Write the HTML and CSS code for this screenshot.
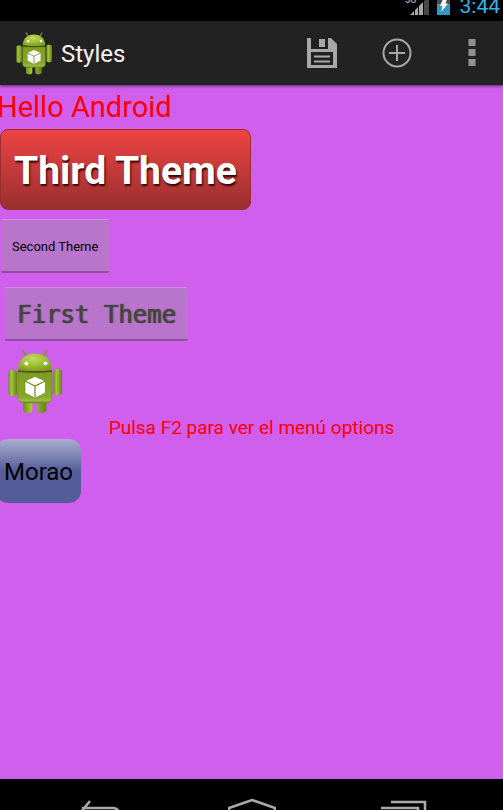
FILE: index.html
```html
<!DOCTYPE html>
<html lang="es">
<head>
<meta charset="utf-8">
<meta name="viewport" content="width=device-width, initial-scale=1">
<title>Styles</title>
<link rel="stylesheet" href="styles.css">
</head>
<body>
<svg class="defs" aria-hidden="true">
  <defs>
    <linearGradient id="side" x1="0" x2="1" y1="0" y2="0">
      <stop offset="0" stop-color="#6f8f16"/><stop offset=".35" stop-color="#a3c639"/><stop offset="1" stop-color="#65801a"/>
    </linearGradient>
    <linearGradient id="torso" x1="0" x2="0" y1="0" y2="1">
      <stop offset="0" stop-color="#7f9c20"/><stop offset=".8" stop-color="#88a828"/><stop offset=".92" stop-color="#9cb944"/><stop offset="1" stop-color="#6d8b18"/>
    </linearGradient>
    <radialGradient id="dome" cx=".45" cy=".3" r=".7">
      <stop offset="0" stop-color="#c3db62"/><stop offset=".5" stop-color="#a0c234"/><stop offset="1" stop-color="#7f9f1e"/>
    </radialGradient>
    <symbol id="robot" viewBox="0 0 54 64">
      <path d="M15 1l4 6M39 1l-4 6" stroke="#7c9820" stroke-width="1.6" stroke-linecap="round"/>
      <path d="M29 50h9.500v10q0 3-4.700 3t-4.800-3zM15 50h9.500v10q0 3-4.700 3t-4.800-3z" fill="url(#side)"/>
      <rect x=".5" y="20" width="8.500" height="26" rx="3" fill="url(#side)"/>
      <rect x="45.500" y="19" width="8.500" height="26" rx="3" fill="url(#side)"/>
      <path d="M10 22h34v25q0 6-7 6H17q-7 0-7-6z" fill="url(#torso)" stroke="#708e18" stroke-width=".7"/>
      <path d="M10 20C10 10 17 3.500 27 3.500S44 10 44 20q-17 2-34 0z" fill="url(#dome)"/>
      <path d="M10 21q17 2 34 0" fill="none" stroke="#405510" stroke-width="1.300"/>
      <circle cx="18.300" cy="13.500" r="1.900" fill="#fff"/><circle cx="37.500" cy="13.300" r="1.900" fill="#fff"/>
      <path d="M27 26.500l10.300 4.500v12L27 48l-10-5V31z" fill="#fff" stroke="#698417" stroke-width=".6"/>
      <path d="M17 31l10 5 10.300-5M27 36v11.500" fill="none" stroke="#72891d" stroke-width="1.200"/>
    </symbol>
  </defs>
</svg>

<div class="screen">
  <header class="status">
    <span class="network">3G</span>
    <svg class="signal" viewBox="0 0 19 19" aria-hidden="true"><path d="M0 19L4 15v4zM5 14l3-3v8H5zM9 10l4-4v13H9z" fill="#aaa"/><path d="M14 5l5-5v19h-5z" fill="#484848"/></svg>
    <svg class="battery" viewBox="0 0 13 19" aria-hidden="true"><path d="M0 0h13v19H0z" fill="#3495be"/><path d="M0 0h13v8H0z" fill="#4b4b4b"/><path d="M6 3h4L8.500 7.500H11L4 16l1.500-6H3z" fill="#fff"/></svg>
    <time class="clock">3:44</time>
  </header>

  <nav class="actionbar">
    <svg class="app-icon" aria-hidden="true"><use href="#robot"/></svg>
    <h1 class="title">Styles</h1>
    <button class="action" aria-label="Guardar">
      <svg class="glyph" viewBox="0 0 30 30" aria-hidden="true"><path fill-rule="evenodd" d="M0 0h4v11h17V0h3l6 6v24H0zM4 14v13h22V14z" fill="#a8a8a8"/><path d="M12 1h6v8h-6z" fill="#a8a8a8"/><path d="M7 18.500h16M7 23.500h16" stroke="#a8a8a8" stroke-width="2"/></svg>
    </button>
    <button class="action" aria-label="Añadir">
      <svg class="glyph" viewBox="0 0 30 30" aria-hidden="true"><circle cx="15" cy="15" r="13.500" fill="none" stroke="#a8a8a8" stroke-width="2"/><path d="M15 7v16M7 15h16" stroke="#a8a8a8" stroke-width="2"/></svg>
    </button>
    <button class="action" aria-label="Más opciones">
      <svg class="glyph" viewBox="0 0 30 30" aria-hidden="true"><path d="M11.500 1h7v7h-7zM11.500 11h7v7h-7zM11.500 21h7v7h-7z" fill="#929292"/></svg>
    </button>
  </nav>

  <main class="content">
    <p class="hello">Hello Android</p>
    <button class="btn third">Third Theme</button>
    <button class="btn flat second">Second Theme</button>
    <button class="btn flat first">First Theme</button>
    <svg class="picture" role="img" aria-label="Android"><use href="#robot"/></svg>
    <p class="hint">Pulsa F2 para ver el menú options</p>
    <button class="btn morao">Morao</button>
  </main>

  <footer class="navbar">
    <button class="key" aria-label="Atrás"><svg class="keyglyph" viewBox="0 0 48 12" aria-hidden="true"><path d="M14 3L5 14M6 10h31q4 0 6 4" fill="none" stroke="#aaa" stroke-width="2.500"/></svg></button>
    <button class="key" aria-label="Inicio"><svg class="keyglyph" viewBox="0 0 48 12" aria-hidden="true"><path d="M1 13V10L24 2l23 8v3" fill="none" stroke="#aaa" stroke-width="2.500"/></svg></button>
    <button class="key" aria-label="Recientes"><svg class="keyglyph" viewBox="0 0 48 12" aria-hidden="true"><path d="M11 4h34v10M1 10h37v3" fill="none" stroke="#aaa" stroke-width="2.500"/></svg></button>
  </footer>
</div>
</body>
</html>
```
FILE: styles.css
```css
* {
  box-sizing: border-box;
}

body {
  margin: 0;
  background: #000;
  font-family: Roboto, "Liberation Sans", sans-serif;
}

p,
h1 {
  margin: 0;
  font-weight: 400;
}

button {
  font-family: inherit;
  border: 0;
  padding: 0;
  background: none;
  color: inherit;
}

.defs {
  position: absolute;
  width: 0;
  height: 0;
}

.screen {
  display: flex;
  flex-direction: column;
  height: 100vh;
  overflow: hidden;
}

/* Status bar, cut by the top of the window */
.status {
  display: flex;
  flex: none;
  align-items: flex-end;
  justify-content: flex-end;
  height: 21px;
  padding: 0 3px 6px 0;
  overflow: hidden;
  background: #000;
}

.network {
  margin-right: -7px;
  padding-bottom: 10px;
  color: #999;
  font-size: 9px;
  font-weight: 700;
  line-height: 10px;
}

.signal {
  flex: none;
  width: 19px;
  height: 19px;
}

.battery {
  flex: none;
  width: 13px;
  height: 19px;
  margin: 0 10px 0 8px;
}

.clock {
  margin-bottom: -3px;
  color: #33b5e5;
  font-size: 21px;
  line-height: 24px;
}

.actionbar {
  position: relative;
  display: flex;
  flex: none;
  align-items: center;
  height: 64px;
  padding-left: 16px;
  background: #222;
  box-shadow: 0 1px 3px rgba(0, 0, 0, 0.6);
}

.app-icon {
  flex: none;
  width: 36px;
  height: 43px;
}

.title {
  flex: 1;
  padding: 2px 0 0 9px;
  color: #f3f3f3;
  font-size: 24px;
  line-height: 28px;
}

.action {
  display: flex;
  align-items: center;
  justify-content: center;
  width: 75px;
  height: 64px;
}

/* The overflow button bleeds over the right edge */
.action:last-child {
  margin-right: -6px;
}

.glyph {
  width: 30px;
  height: 30px;
}

.content {
  display: flex;
  flex: 1;
  flex-direction: column;
  align-items: flex-start;
  min-height: 0;
  overflow: hidden;
  background: #d05fee;
}

.hello {
  margin: 4px 0 4px -3px;
  color: #f00;
  font-size: 29px;
  line-height: 36px;
}

.btn {
  display: block;
  flex: none;
}

.third {
  height: 81px;
  padding: 2px 13px 0;
  border: 1px solid #992f2f;
  border-radius: 8px;
  background: linear-gradient(#ef4444, #992f2f);
  color: #fff;
  font-size: 39px;
  font-weight: 700;
  text-shadow: 1px 2px 2px #300;
}

.flat {
  height: 54px;
  padding: 2px 11px 0;
  border-top: 1px solid #d18ce4;
  border-bottom: 2px solid #87539a;
  border-radius: 2px;
  background: #b975cc;
}

.second {
  margin: 9px 0 0 1px;
  color: #000;
  font-size: 13px;
}

.first {
  margin: 14px 0 0 5px;
  padding: 2px 12px 0;
  color: #444;
  font-family: "DejaVu Sans Mono", monospace;
  font-size: 24px;
  text-shadow: 0 0 1px #444, 1px 0 1px #555;
}

.picture {
  flex: none;
  width: 54px;
  height: 64px;
  margin: 9px 0 0 8px;
}

.hint {
  align-self: center;
  padding: 3px 0 0;
  color: #f00;
  font-size: 19px;
  line-height: 22px;
}

.morao {
  height: 64px;
  margin-left: -4px;
  padding: 2px 8px 0;
  border-radius: 12px;
  background: linear-gradient(#aaadd0, #555d99 50%, #555d99);
  color: #000;
  font-size: 24px;
}

.navbar {
  display: flex;
  flex: none;
  align-items: flex-end;
  justify-content: center;
  gap: 104px;
  height: 31px;
  background: #000;
}

.keyglyph {
  display: block;
  width: 48px;
  height: 12px;
}
```
